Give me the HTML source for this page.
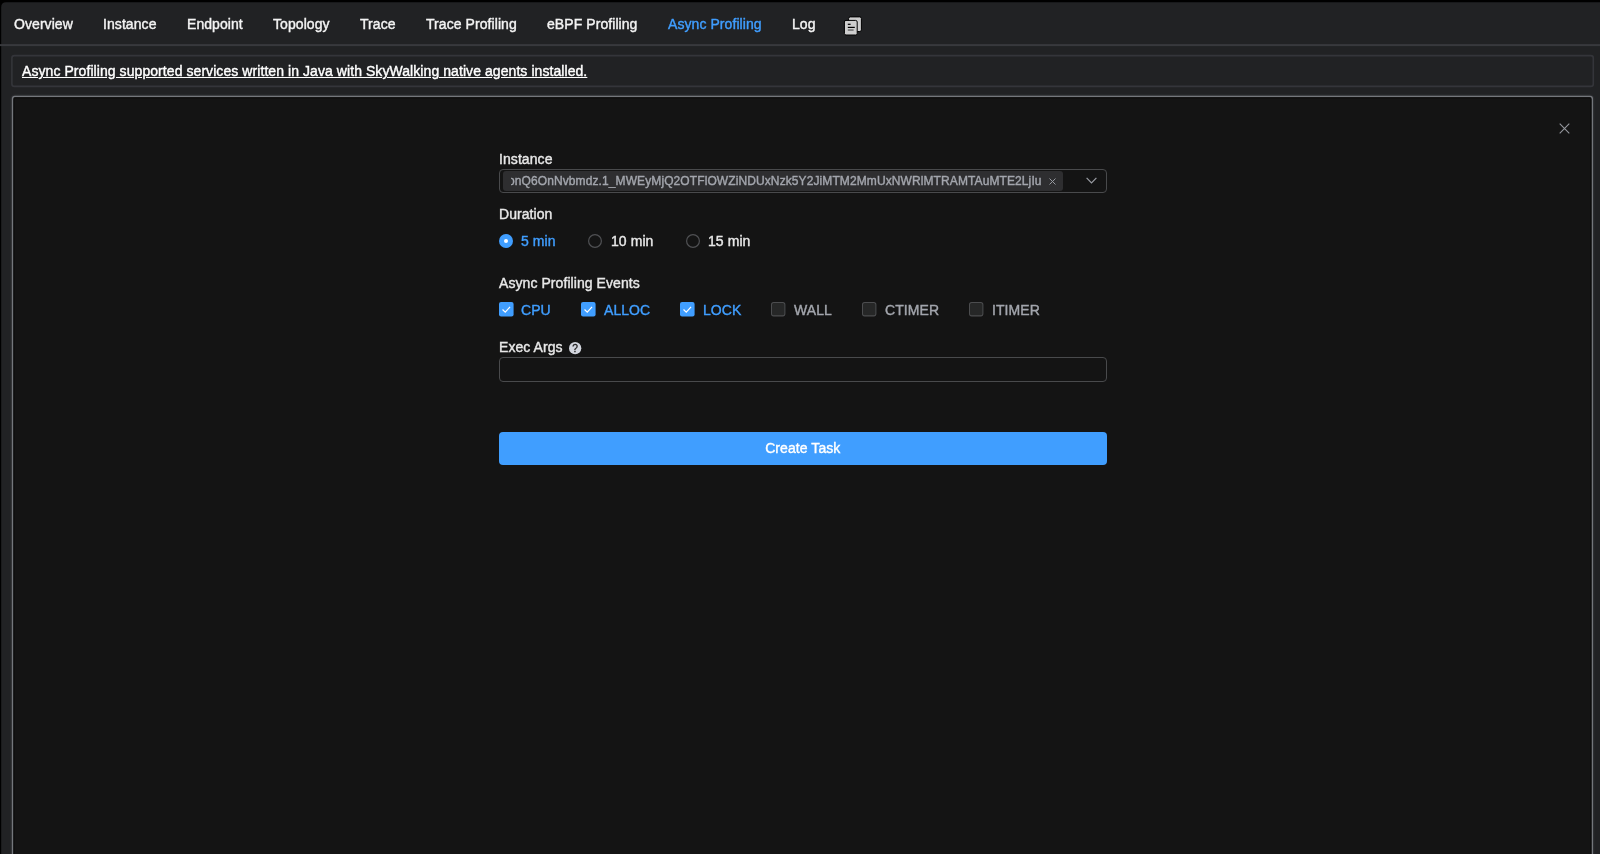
<!DOCTYPE html>
<html>
<head>
<meta charset="utf-8">
<title>Async Profiling</title>
<style>
*{box-sizing:border-box;margin:0;padding:0}
html,body{width:1600px;height:854px;overflow:hidden;background:#000}
body{font-family:"Liberation Sans",Arial,Helvetica,sans-serif;font-size:14px;color:#e3e3e3;position:relative}
.app{position:absolute;left:1px;top:2.5px;width:1599px;height:852px}
.tabs{position:absolute;left:0;top:0;width:100%;height:43.6px}
.tab,.lbl,.radio,.chk,.btn,.banner span,.tag .t{letter-spacing:0.07px;-webkit-text-stroke:0.4px currentColor;will-change:transform}
.tab{position:absolute;top:13.2px;line-height:16px;font-size:14px;color:#f4f4f4;white-space:nowrap}
.tab.active{color:#409eff}
.banner{position:absolute;left:10.5px;top:52.5px;width:1582px;height:32px;border:1.5px solid transparent;border-radius:2.5px}
.banner span{position:absolute;left:9.5px;top:7px;line-height:16px;font-size:14px;color:#fff;text-decoration:underline;white-space:nowrap}
.panel{position:absolute;left:11px;top:93.5px;width:1581px;height:780px;background:#141414;border:1.5px solid #797c81;border-radius:2.5px}
.lbl{position:absolute;left:499px;font-size:14px;line-height:16px;color:#e8e8e8;white-space:nowrap}
.select{position:absolute;left:499px;top:169px;width:607.6px;height:24px;border:1px solid #494a4c;border-radius:4px;background:#141414}
.tag{position:absolute;left:3px;top:1px;width:560px;height:20px;background:#2e2e30;border-radius:3px;overflow:hidden}
.tag .clip{position:absolute;left:7.5px;top:0;width:532px;height:20px;overflow:hidden}
.tag .t{letter-spacing:0.10px;position:absolute;right:0.5px;top:2.5px;font-size:12px;line-height:15px;color:#a3a6ad;white-space:nowrap}
.radio,.chk{position:absolute;font-size:14px;line-height:16px;white-space:nowrap;color:#e8e8e8}
.blue{color:#409eff}
.input{position:absolute;left:499px;top:357px;width:607.6px;height:24.5px;border:1px solid #494a4c;border-radius:4px;background:#141414}
.btn{position:absolute;left:499px;top:432px;width:607.6px;height:32.8px;background:#409eff;border-radius:4px;color:#fff;text-align:center;line-height:33.6px;font-size:14px}
svg{position:absolute;overflow:visible}
</style>
</head>
<body>
<svg style="left:0;top:0" width="1600" height="854" viewBox="0 0 1600 854">
  <path d="M1.2 860V7.3Q1.2 2.3 6.2 2.3H1610V860Z" fill="#212224"/>
  <rect x="0" y="44.1" width="1600" height="2" fill="#38393d"/>
  <rect x="12.6" y="96.5" width="1579.7" height="800" rx="2.5" fill="none" stroke="#2b2c2f" stroke-width="4.2"/>
  <rect x="12.6" y="96.5" width="1579.7" height="800" rx="2.2" fill="#141414" stroke="#74777c" stroke-width="1.5"/>
  <rect x="14" y="97.9" width="1576.9" height="800" rx="1.5" fill="none" stroke="#0c0c0c" stroke-width="1.1"/>
</svg>
<div class="app">
  <div class="tabs">
    <span class="tab" style="left:13px">Overview</span>
    <span class="tab" style="left:102px">Instance</span>
    <span class="tab" style="left:186px">Endpoint</span>
    <span class="tab" style="left:272px">Topology</span>
    <span class="tab" style="left:359px">Trace</span>
    <span class="tab" style="left:425px">Trace Profiling</span>
    <span class="tab" style="left:546px">eBPF Profiling</span>
    <span class="tab active" style="left:667px">Async Profiling</span>
    <span class="tab" style="left:791px">Log</span>
  </div>
  <div class="banner"><span>Async Profiling supported services written in Java with SkyWalking native agents installed.</span></div>
</div>
<svg style="left:0;top:0;pointer-events:none" width="1600" height="854" viewBox="0 0 1600 854">
  <rect x="11.9" y="55.6" width="1581.4" height="30.8" rx="2.5" fill="none" stroke="#34353a" stroke-width="1.6"/>
</svg>
<div class="lbl" style="top:150.7px">Instance</div>
<div class="select"><div class="tag"><div class="clip"><span class="t">onQ6OnNvbmdz.1_MWEyMjQ2OTFlOWZiNDUxNzk5Y2JiMTM2MmUxNWRlMTRAMTAuMTE2LjIu</span></div></div></div>
<div class="lbl" style="top:206.3px">Duration</div>
<div class="radio blue" style="left:521.3px;top:233.3px">5 min</div>
<div class="radio" style="left:611px;top:233.3px">10 min</div>
<div class="radio" style="left:708.3px;top:233.3px">15 min</div>
<div class="lbl" style="top:274.6px">Async Profiling Events</div>
<div class="chk blue" style="left:521.3px;top:301.5px">CPU</div>
<div class="chk blue" style="left:604px;top:301.5px">ALLOC</div>
<div class="chk blue" style="left:703.4px;top:301.5px">LOCK</div>
<div class="chk" style="left:794px;top:301.5px;color:#a3a6ad">WALL</div>
<div class="chk" style="left:885px;top:301.5px;color:#a3a6ad">CTIMER</div>
<div class="chk" style="left:991.5px;top:301.5px;color:#a3a6ad">ITIMER</div>
<div class="lbl" style="top:339px;left:499.4px">Exec Args</div>
<div class="input"></div>
<div class="btn">Create Task</div>
<svg style="left:843px;top:15px" width="20" height="22" viewBox="0 0 20 22">
  <rect x="5.6" y="1.9" width="12.8" height="14.6" rx="1.6" fill="#cecece" stroke="#000" stroke-width="1"/>
  <rect x="1.4" y="5.4" width="12.8" height="14.6" rx="1.6" fill="#cecece" stroke="#000" stroke-width="1"/>
  <rect x="4.8" y="8.7" width="2.8" height="1.2" fill="#000"/>
  <rect x="4.8" y="11.8" width="7" height="1.2" fill="#000"/>
  <rect x="4.8" y="14.2" width="5.8" height="1.7" fill="#767676"/>
</svg>
<svg style="left:1559px;top:123.1px" width="11" height="11" viewBox="0 0 11 11"><path d="M0.7 0.7L10.3 10.3M10.3 0.7L0.7 10.3" stroke="#94979d" stroke-width="1.1" fill="none"/></svg>
<svg style="left:1048.5px;top:177.5px" width="7" height="7" viewBox="0 0 7 7"><path d="M0.5 0.5L6.5 6.5M6.5 0.5L0.5 6.5" stroke="#96999f" stroke-width="1" fill="none"/></svg>
<svg style="left:1086.2px;top:176.8px" width="11" height="7" viewBox="0 0 11 7"><path d="M0.6 0.8L5.5 5.8L10.4 0.8" stroke="#9a9da4" stroke-width="1.2" fill="none"/></svg>
<svg style="left:499px;top:234px" width="14" height="14" viewBox="0 0 14 14"><circle cx="7" cy="7" r="7" fill="#409eff"/><circle cx="7" cy="7" r="2" fill="#fff"/></svg>
<svg style="left:588px;top:234px" width="14" height="14" viewBox="0 0 14 14"><circle cx="7" cy="7" r="6.4" fill="#141414" stroke="#505154" stroke-width="1.2"/></svg>
<svg style="left:685.5px;top:234px" width="14" height="14" viewBox="0 0 14 14"><circle cx="7" cy="7" r="6.4" fill="#141414" stroke="#505154" stroke-width="1.2"/></svg>
<svg style="left:498.8px;top:302.2px" width="14.6" height="14.6" viewBox="0 0 14 14"><rect width="14" height="14" rx="2" fill="#409eff"/><path d="M3.4 7.2L6 9.8L10.6 4.6" stroke="#fff" stroke-width="1.15" fill="none"/></svg>
<svg style="left:581px;top:302.2px" width="14.6" height="14.6" viewBox="0 0 14 14"><rect width="14" height="14" rx="2" fill="#409eff"/><path d="M3.4 7.2L6 9.8L10.6 4.6" stroke="#fff" stroke-width="1.15" fill="none"/></svg>
<svg style="left:680.2px;top:302.2px" width="14.6" height="14.6" viewBox="0 0 14 14"><rect width="14" height="14" rx="2" fill="#409eff"/><path d="M3.4 7.2L6 9.8L10.6 4.6" stroke="#fff" stroke-width="1.15" fill="none"/></svg>
<svg style="left:771.4px;top:302.3px" width="14.4" height="14.4" viewBox="0 0 14 14"><rect x=".5" y=".5" width="13" height="13" rx="2" fill="#262727" stroke="#4c4d4f"/></svg>
<svg style="left:862px;top:302.3px" width="14.4" height="14.4" viewBox="0 0 14 14"><rect x=".5" y=".5" width="13" height="13" rx="2" fill="#262727" stroke="#4c4d4f"/></svg>
<svg style="left:969.3px;top:302.3px" width="14.4" height="14.4" viewBox="0 0 14 14"><rect x=".5" y=".5" width="13" height="13" rx="2" fill="#262727" stroke="#4c4d4f"/></svg>
<svg style="left:569px;top:342px;will-change:transform" width="12.3" height="12.3" viewBox="0 0 12.5 12.5"><circle cx="6.25" cy="6.25" r="6.25" fill="#d3d6de"/><text x="6.2" y="10" text-anchor="middle" font-family="Liberation Sans, sans-serif" font-size="10.4" fill="#1c1c1c" stroke="#1c1c1c" stroke-width="0.3">?</text></svg>

</body>
</html>
